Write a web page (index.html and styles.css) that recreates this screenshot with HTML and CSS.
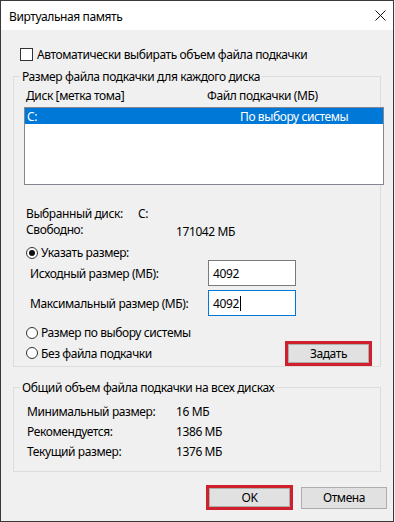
FILE: index.html
```html
<!DOCTYPE html>
<html lang="ru">
<head>
<meta charset="utf-8">
<title>Виртуальная память</title>
<link rel="stylesheet" href="styles.css">
</head>
<body>
<div class="window">
  <div class="titlebar">
    <span class="title">Виртуальная память</span>
    <svg class="close" width="11" height="11" viewBox="0 0 11 11"><path d="M0.5 0.5L10.5 10.5M10.5 0.5L0.5 10.5" stroke="#111" stroke-width="1" fill="none"/></svg>
  </div>
  <div class="content">
    <div class="auto"><span class="checkbox"></span><span>Автоматически выбирать объем файла подкачки</span></div>
    <fieldset class="group g1">
      <legend>Размер файла подкачки для каждого диска</legend>
      <div class="colhead"><span class="col1">Диск [метка тома]</span><span>Файл подкачки (МБ)</span></div>
      <div class="listbox">
        <div class="lrow selected"><span class="lcol1">C:</span><span>По выбору системы</span></div>
      </div>
      <div class="info"><span class="ilabel">Выбранный диск:</span><span>C:</span></div>
      <div class="info free"><span class="ilabel2">Свободно:</span><span class="fval">171042 МБ</span></div>
      <div class="radio-row r1"><span class="radio checked"></span><span>Указать размер:</span></div>
      <div class="field"><span class="flabel">Исходный размер (МБ):</span><span class="input">4092</span></div>
      <div class="field f2"><span class="flabel">Максимальный размер (МБ):</span><span class="input focus">4092<span class="caret"></span></span></div>
      <div class="radio-row r2"><span class="radio"></span><span>Размер по выбору системы</span></div>
      <div class="radio-row r3"><span class="radio"></span><span>Без файла подкачки</span><span class="hl set"><span class="btn">Задать</span></span></div>
    </fieldset>
    <fieldset class="group g2">
      <legend>Общий объем файла подкачки на всех дисках</legend>
      <div class="trow"><span class="tlabel">Минимальный размер:</span><span>16 МБ</span></div>
      <div class="trow"><span class="tlabel">Рекомендуется:</span><span>1386 МБ</span></div>
      <div class="trow"><span class="tlabel">Текущий размер:</span><span>1376 МБ</span></div>
    </fieldset>
    <div class="buttons">
      <span class="hl ok"><span class="btn">OK</span></span>
      <span class="btn cancel">Отмена</span>
    </div>
  </div>
</div>
</body>
</html>
```

FILE: styles.css
```css
* { box-sizing: border-box; }
html, body { margin: 0; padding: 0; background: #f0f0f0; }
body {
  font-family: "Noto Sans", "Open Sans", sans-serif;
  font-size: 12px;
  line-height: 15px;
  letter-spacing: -0.4px;
  color: #000;
}
.window {
  width: 394px;
  height: 522px;
  border: 1px solid #3a3a3a;
  display: flex;
  flex-direction: column;
  background: #f0f0f0;
}
.titlebar {
  height: 29px;
  background: #fff;
  display: flex;
  align-items: center;
  justify-content: space-between;
  padding-left: 8px;
  padding-right: 7px;
  flex: none;
}
.title { padding-top: 1px; }
.close { display: block; }
.content {
  flex: 1;
  padding-left: 12px;
  display: flex;
  flex-direction: column;
  align-items: flex-start;
}
.auto {
  margin-top: 17px;
  height: 15px;
  display: flex;
  align-items: center;
  padding-left: 7px;
}
.checkbox {
  width: 13px;
  height: 13px;
  border: 1px solid #333;
  background: #fff;
  margin-right: 4px;
  flex: none;
}
.group {
  margin: 0;
  padding: 0;
  min-width: 0;
  width: 368px;
  border: 1px solid #dcdcdc;
}
.group legend {
  margin-left: 6px;
  padding: 0 2px;
  line-height: 15px;
}
.g1 { margin-top: 7px; }
.colhead {
  margin-top: 4px;
  height: 15px;
  display: flex;
  padding-left: 12px;
}
.col1 { width: 181px; }
.listbox {
  margin-top: 4px;
  margin-left: 10px;
  width: 360px;
  height: 78px;
  border: 1px solid #828790;
  background: #fff;
}
.lrow {
  height: 16px;
  display: flex;
  align-items: center;
  padding-left: 2px;
}
.lrow.selected { background: #0078d7; color: #fff; }
.lcol1 { width: 213px; }
.info {
  display: flex;
  padding-left: 12px;
  height: 15px;
}
.listbox + .info { margin-top: 21px; }
.ilabel { width: 112px; }
.info.free { height: 17px; margin-top: 1px; }
.ilabel2 { width: 150px; }
.fval { padding-top: 2px; }
.radio-row {
  display: flex;
  align-items: center;
  padding-left: 12px;
  height: 15px;
}
.r1 { margin-top: 6px; }
.r2 { margin-top: 9px; }
.r3 { height: 26px; }
.radio {
  width: 12px;
  height: 12px;
  border: 1px solid #333;
  border-radius: 50%;
  background: #fff;
  margin-right: 3px;
  flex: none;
  display: flex;
  align-items: center;
  justify-content: center;
}
.radio.checked::after {
  content: "";
  width: 6px;
  height: 6px;
  border-radius: 50%;
  background: #111;
}
.field {
  display: flex;
  align-items: center;
  height: 26px;
  padding-left: 16px;
}
.f2 { margin-top: 4px; }
.flabel { width: 178px; }
.input {
  width: 88px;
  height: 26px;
  border: 1px solid #7a7a7a;
  background: #fff;
  padding-left: 4px;
  display: flex;
  align-items: center;
}
.input.focus { border-color: #0078d7; }
.caret {
  width: 1px;
  height: 15px;
  background: #000;
  margin-left: 1px;
}
.hl {
  border: 3px solid #d0202e;
  display: flex;
  flex: none;
}
.set {
  margin-left: auto;
  margin-right: 8px;
  width: 87px;
  height: 25px;
}
.btn {
  flex: 1;
  display: flex;
  align-items: center;
  justify-content: center;
  background: #e1e1e1;
  border: 1px solid #adadad;
}
.g2 { margin-top: 13px; padding-top: 6px; padding-bottom: 10px; }
.trow {
  display: flex;
  height: 20px;
  align-items: center;
  padding-left: 13px;
}
.tlabel { width: 149px; }
.buttons {
  margin-top: 13px;
  align-self: stretch;
  display: flex;
  justify-content: flex-end;
  align-items: center;
  gap: 8px;
  padding-right: 6px;
}
.ok { width: 87px; height: 25px; }
.cancel { flex: none; width: 86px; height: 22px; }
```
